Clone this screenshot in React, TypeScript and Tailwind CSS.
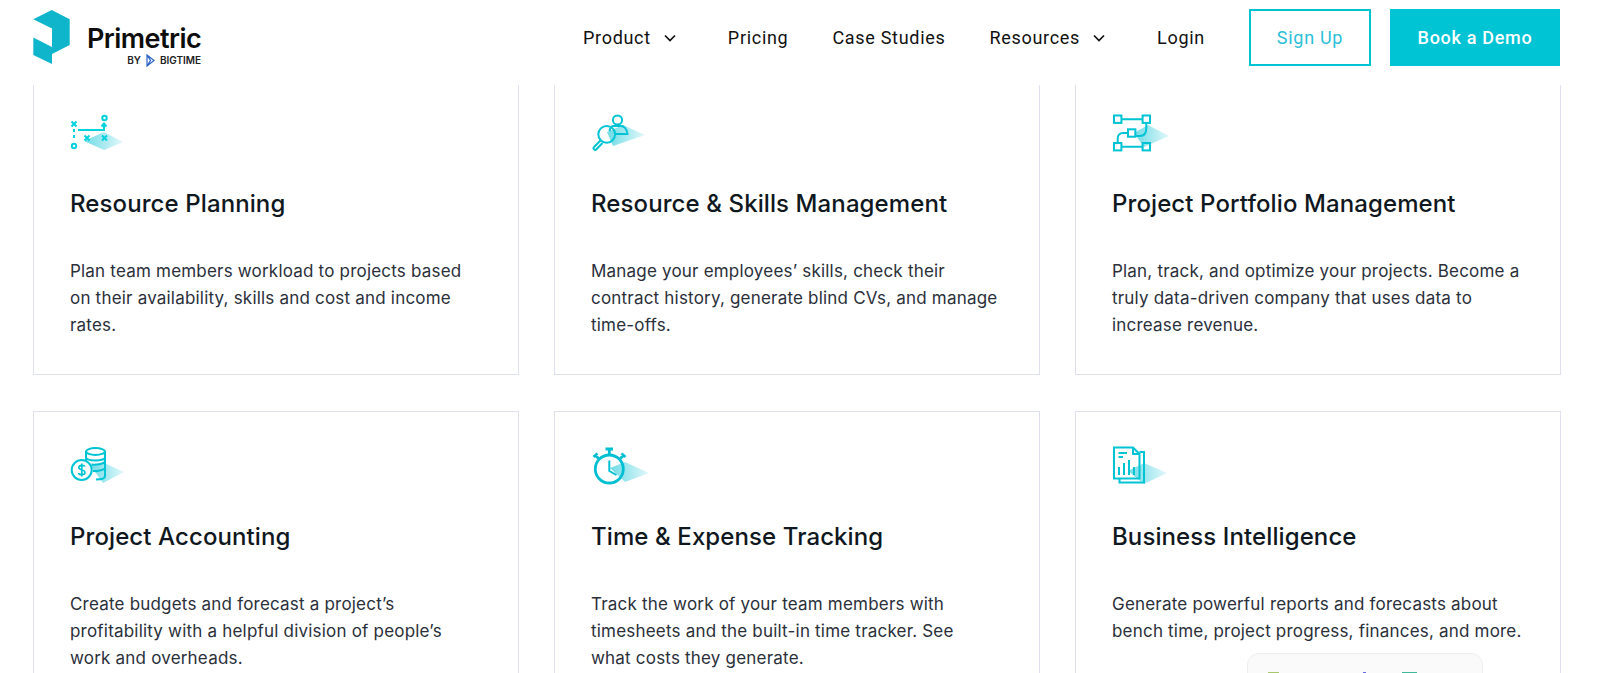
function Tri({ id, d }: { id: string; d: string }) {
  return (
    <>
      <defs>
        <linearGradient id={id} x1="0" y1="0" x2="1" y2="0">
          <stop offset="0" stopColor="#6fdbe6" />
          <stop offset="1" stopColor="#e2f8fa" />
        </linearGradient>
      </defs>
      <path d={d} fill={`url(#${id})`} stroke="none" />
    </>
  )
}

function Cross({ x, y }: { x: number; y: number }) {
  return <path d={`M${x - 2.5} ${y - 2.5}l5 5M${x + 2.5} ${y - 2.5}l-5 5`} />
}

function IconPlanning() {
  return (
    <svg width="60" height="44" viewBox="0 0 60 44" fill="none" stroke="#00d2de" strokeWidth="2">
      <Tri id="t1" d="M14 31L34 22L53 32L34 40Z" />
      <Cross x={4} y={14} />
      <path d="M4 19v3M4 25v3" />
      <circle cx="4" cy="36" r="2.2" />
      <path d="M8 20H34V14" />
      <path d="M31.5 16.5L34 13.5L36.5 16.5" />
      <circle cx="34.5" cy="8" r="2.2" />
      <Cross x={17} y={28} />
      <Cross x={34.5} y={28} />
    </svg>
  )
}

function IconSkills() {
  return (
    <svg width="60" height="44" viewBox="0 0 60 44" fill="none" stroke="#00c4d4" strokeWidth="2">
      <Tri id="t2" d="M16 22L32 15L54 25L22 36Z" />
      <circle cx="26.5" cy="10" r="4.6" />
      <path d="M18.5 21C19 18 21 16 23 16H30C33 16 36 19 36.5 24H24" />
      <circle cx="15.7" cy="24.3" r="8.4" />
      <path d="M9.5 30.5L3 37a1.6 1.6 0 0 0 2.4 2.3L11.5 33" />
    </svg>
  )
}

function IconPortfolio() {
  return (
    <svg width="60" height="44" viewBox="0 0 60 44" fill="none" stroke="#00c4d4" strokeWidth="2">
      <Tri id="t3" d="M22 23L36 15L57 26L32 37Z" />
      <rect x="2" y="5.5" width="7.4" height="7.4" />
      <rect x="30.6" y="5.5" width="7.4" height="7.4" />
      <rect x="16" y="19.3" width="7.4" height="7.4" />
      <rect x="2" y="33" width="7.4" height="7.4" />
      <rect x="30.6" y="33" width="7.4" height="7.4" />
      <path d="M9.4 9.2H30.6M9.4 36.7H30.6" />
      <path d="M34.3 13V18C34.3 23 32 26 28 26H23.4" />
      <path d="M16 23H11C7.5 23 5.7 25.5 5.7 28.5V33" />
    </svg>
  )
}

function IconAccounting() {
  return (
    <svg width="60" height="44" viewBox="0 0 60 44" fill="none" stroke="#00c4d4" strokeWidth="2">
      <Tri id="t4" d="M20 22L34 20L54 29L33 40Z" />
      <ellipse cx="25.5" cy="8.5" rx="9.4" ry="3.4" />
      <path d="M16 8.5V17M35 8.5V33C35 35.5 30 36.5 26 36.5" />
      <path d="M16 15C18 18 32 18.5 35 15M21.5 21.5C26 22 33 21 35 19M23 28C27 28.5 33 27 35 25.5" />
      <circle cx="11.7" cy="27" r="10" fill="#fff" />
      <path d="M15 23.5C14.5 22 9 21.5 8.8 24.5C8.6 27.5 15 26 15 29.5C15 32.5 9 32 8.5 30M11.8 20.5V33.5" strokeWidth="1.7" />
    </svg>
  )
}

function IconTime() {
  return (
    <svg width="60" height="44" viewBox="0 0 60 44" fill="none" stroke="#00bfd2" strokeWidth="2.8">
      <Tri id="t5" d="M19 25L34 19L58 30L34 39Z" />
      <circle cx="18.3" cy="26" r="14" />
      <path d="M14.5 6H22M18.3 6V11" />
      <path d="M2.5 14L6.5 10.5M4.5 12.3L7.5 15.5M34.5 14L30.5 10.5M32.5 12.3L29.5 15.5" />
      <path d="M18.3 17.5V28L25.5 32" strokeWidth="2" />
    </svg>
  )
}

function IconReports() {
  return (
    <svg width="60" height="44" viewBox="0 0 60 44" fill="none" stroke="#00c4d4" strokeWidth="2">
      <Tri id="t6" d="M16 28L32 20L55 30L32 41Z" />
      <path d="M27.5 9H32V39.5H7.5V35.5" />
      <path d="M2 4.5H21L27.5 11V35.5H2Z" />
      <path d="M21 4.5V11H27.5" />
      <path d="M6.5 10H15M6.5 14H11" />
      <path d="M7 32V24M12 32V20M17 32V17M22 32V24" />
    </svg>
  )
}

const cards = [
  {
    icon: <IconPlanning />,
    title: "Resource Planning",
    lines: ["Plan team members workload to projects based", "on their availability, skills and cost and income", "rates."],
  },
  {
    icon: <IconSkills />,
    title: "Resource & Skills Management",
    lines: ["Manage your employees’ skills, check their", "contract history, generate blind CVs, and manage", "time-offs."],
  },
  {
    icon: <IconPortfolio />,
    title: "Project Portfolio Management",
    lines: ["Plan, track, and optimize your projects. Become a", "truly data-driven company that uses data to", "increase revenue."],
  },
  {
    icon: <IconAccounting />,
    title: "Project Accounting",
    lines: ["Create budgets and forecast a project’s", "profitability with a helpful division of people’s", "work and overheads."],
  },
  {
    icon: <IconTime />,
    title: "Time & Expense Tracking",
    lines: ["Track the work of your team members with", "timesheets and the built-in time tracker. See", "what costs they generate."],
  },
  {
    icon: <IconReports />,
    title: "Business Intelligence",
    lines: ["Generate powerful reports and forecasts about", "bench time, project progress, finances, and more."],
  },
]

function Chevron() {
  return (
    <svg width="12" height="8" viewBox="0 0 12 8" fill="none" stroke="#111" strokeWidth="1.7">
      <path d="M1 1.5L6 6.5L11 1.5" />
    </svg>
  )
}

function Navbar() {
  return (
    <nav className="fixed top-0 left-0 z-10 flex h-[85px] w-full items-center justify-between bg-white pr-10 pl-[33px]">
      <div className="flex items-start">
        <svg width="38" height="56" viewBox="33 10 38 56" className="mb-[10px]">
          <path d="M33.3 19.3L51.7 10L69.7 19.3V45L52 54V28.5Z" fill="#0fb5cb" />
          <path d="M33.3 37.5L52 47V64L33.3 55Z" fill="#0fb5cb" />
        </svg>
        <div className="mt-[13px] ml-[16px] flex flex-col items-end font-['Inter',sans-serif]">
          <span className="text-[27px] leading-[31px] font-semibold tracking-[-0.55px] text-[#0d0d0d]">Primetric</span>
          <span className="flex items-center text-[10px] leading-[12px] font-semibold text-[#222]">
            BY
            <svg width="9" height="13" viewBox="0 0 9 13" fill="none" stroke="#2a62c9" strokeWidth="1.2" className="mx-[5px]">
              <path d="M1 1L8 6.5L1 12ZM1 1L4.5 6.5L1 12" />
            </svg>
            BIGTIME
          </span>
        </div>
      </div>
      <div className="mb-[10px] flex items-center gap-[44px] font-['Roboto',sans-serif] text-[18px] tracking-[0.7px] text-[#111]">
        <a className="flex items-center gap-[13px] pr-[8px]">Product <Chevron /></a>
        <a>Pricing</a>
        <a>Case Studies</a>
        <a className="flex items-center gap-[13px] pr-[8px]">Resources <Chevron /></a>
        <a>Login</a>
        <div className="flex items-center gap-[19px]">
          <a className="flex h-[57px] w-[122px] items-center justify-center border-2 border-[#00c4d4] text-[#2bbfd8]">Sign Up</a>
          <a className="flex h-[57px] w-[170px] items-center justify-center bg-[#00c4d4] font-medium text-white">Book a Demo</a>
        </div>
      </div>
    </nav>
  )
}

function App() {
  return (
    <div className="relative h-[673px] overflow-hidden bg-white font-['Inter',sans-serif]">
      <Navbar />
      <main className="grid grid-cols-[486px_486px_486px] gap-x-[35px] gap-y-[36px] pt-[78px] pl-[33px]">
        {cards.map((c) => (
          <div key={c.title} className="h-[297px] border border-[#dfe0ee] px-[36px] pt-[31px]">
            {c.icon}
            <h3 className="mt-[34px] text-[24px] leading-[32px] font-[450] tracking-[0.1px] text-[#0f1720]">{c.title}</h3>
            <p className="mt-[38px] text-[17px] leading-[27px] tracking-[0.2px] text-[#2a2f3a]">
              {c.lines.map((l) => (
                <span key={l} className="block whitespace-nowrap">{l}</span>
              ))}
            </p>
          </div>
        ))}
      </main>
      <div className="absolute top-[653px] left-[1247px] flex h-[40px] w-[236px] items-start rounded-xl border border-[#eeeeee] bg-[#fafafa] pt-[18px] pl-[20px]">
        <span className="h-[2px] w-[11px] bg-[#a8c66c]" />
        <span className="ml-[84px] h-[2px] w-[3px] bg-[#6a6ae0]" />
        <span className="ml-[36px] h-[2px] w-[15px] bg-[#3fb89a]" />
      </div>
    </div>
  )
}

export default App
